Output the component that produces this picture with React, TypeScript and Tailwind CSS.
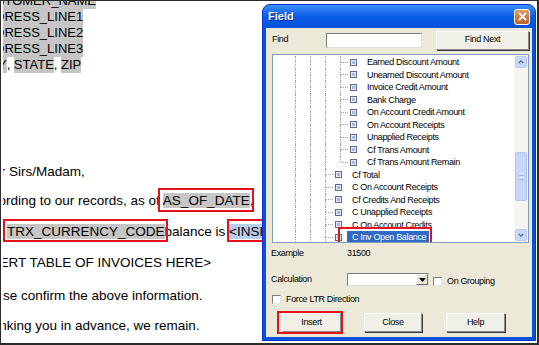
import React from "react";

type Guide = "line" | "tee" | "elbow";

const L3: Guide[] = ["line", "line", "line", "tee"];
const L2: Guide[] = ["line", "line", "tee"];

const treeRows: { label: string; guides: Guide[]; selected?: boolean }[] = [
  { label: "Earned Discount Amount", guides: L3 },
  { label: "Unearned Discount Amount", guides: L3 },
  { label: "Invoice Credit Amount", guides: L3 },
  { label: "Bank Charge", guides: L3 },
  { label: "On Account Credit Amount", guides: L3 },
  { label: "On Account Receipts", guides: L3 },
  { label: "Unapplied Receipts", guides: L3 },
  { label: "Cf Trans Amount", guides: L3 },
  { label: "Cf Trans Amount Remain", guides: ["line", "line", "line", "elbow"] },
  { label: "Cf Total", guides: L2 },
  { label: "C On Account Receipts", guides: L2 },
  { label: "Cf Credits And Receipts", guides: L2 },
  { label: "C Unapplied Receipts", guides: L2 },
  { label: "C On Account Credits", guides: L2 },
  { label: "C Inv Open Balance", guides: L2, selected: true },
];

// red annotation frame drawn over a piece of content
function Marked({ children, box }: { children: React.ReactNode; box: string }) {
  return (
    <span className="relative">
      {children}
      <span className={`pointer-events-none absolute border-2 border-[#e3121b] ${box}`} />
    </span>
  );
}

function GuideCell({ kind }: { kind: Guide }) {
  return (
    <div className="flex w-[15px] shrink-0">
      <div className="flex w-[8px] flex-col">
        <div className="h-1/2 border-r border-dotted border-[#a3a3a3]" />
        <div className={kind === "elbow" ? "h-1/2" : "h-1/2 border-r border-dotted border-[#a3a3a3]"} />
      </div>
      <div className="flex flex-1 flex-col justify-center">
        {kind !== "line" && <div className="border-t border-dotted border-[#a3a3a3]" />}
      </div>
    </div>
  );
}

function FieldIcon() {
  return (
    <div className="ml-[2px] flex h-[7px] w-[7px] shrink-0 items-center justify-center self-center border border-[#5d6c8c] bg-[#e4eaf7]">
      <div className="h-[3px] w-[3px] bg-[#a9b8d8]" />
    </div>
  );
}

function TreeRow({ label, guides, selected }: { label: string; guides: Guide[]; selected?: boolean }) {
  const text = (
    <span
      className={
        selected
          ? "ml-[5px] block h-[12.5px] bg-[#316ac5] pl-[5px] pr-[3px] leading-[12.5px] text-white"
          : "ml-[5px] block h-[12.5px] pl-[5px] pr-[3px] leading-[12.5px]"
      }
    >
      {label}
    </span>
  );
  return (
    <div className="flex h-[12.5px] shrink-0 whitespace-nowrap">
      <div className="w-[15px] shrink-0" />
      {guides.map((g, i) => (
        <GuideCell key={i} kind={g} />
      ))}
      <FieldIcon />
      <div className="self-center">
        {selected ? <Marked box="-left-[4px] -right-[3px] -top-[4px] -bottom-[1px]">{text}</Marked> : text}
      </div>
    </div>
  );
}

function Chevron({ up }: { up?: boolean }) {
  return (
    <svg viewBox="0 0 13 12" className="h-[12px] w-[13px]">
      <polyline
        points={up ? "3.5,7.5 6.5,4.5 9.5,7.5" : "3.5,4.5 6.5,7.5 9.5,4.5"}
        fill="none"
        stroke="#4d6185"
        strokeWidth="1.6"
      />
    </svg>
  );
}

function ScrollBar() {
  return (
    <div className="flex w-[14px] shrink-0 flex-col bg-[#f5f4ef] py-[1px]">
      <div className="mx-[1px] flex h-[12px] items-center justify-center rounded-[2px] border border-[#b7cbf6] bg-[#c8d8fb]">
        <Chevron up />
      </div>
      <div className="h-[84px]" />
      <div className="mx-[1px] flex h-[49px] flex-col items-center justify-center gap-[1px] rounded-[2px] border border-[#b0c6f4] bg-[#c6d7fb]">
        <div className="h-px w-[5px] bg-[#e9effd]" />
        <div className="h-px w-[5px] bg-[#9fb6e8]" />
        <div className="h-px w-[5px] bg-[#e9effd]" />
        <div className="h-px w-[5px] bg-[#9fb6e8]" />
      </div>
      <div className="flex-1" />
      <div className="mx-[1px] flex h-[12px] items-center justify-center rounded-[2px] border border-[#b7cbf6] bg-[#c8d8fb]">
        <Chevron />
      </div>
    </div>
  );
}

function Tree() {
  return (
    <div className="mx-[6px] mt-[5px] flex h-[189px] w-[257px] border border-[#7f9db9] bg-white">
      <div className="flex flex-1 flex-col overflow-hidden pt-[1px]">
        {treeRows.map((r) => (
          <TreeRow key={r.label} {...r} />
        ))}
      </div>
      <ScrollBar />
    </div>
  );
}

function Button({ label, className }: { label: string; className: string }) {
  return (
    <div
      className={`flex h-[19px] items-center justify-center border border-t-white border-l-white border-r-[#8a8a8a] border-b-[#8a8a8a] bg-[#f1f0e8] shadow-[1px_1px_0_#3c3c3c] ${className}`}
    >
      {label}
    </div>
  );
}

function CheckBox() {
  return <div className="h-[9px] w-[9px] shrink-0 border border-t-[#7c7c7c] border-l-[#7c7c7c] border-r-[#e2e2e2] border-b-[#e2e2e2] bg-white" />;
}

function Dialog() {
  return (
    <div className="mt-[3px] flex h-[337px] w-[274px] shrink-0 flex-col overflow-hidden rounded-t-[8px] border border-[#0831d9] bg-[#0a52de]">
      <div className="flex h-[23px] shrink-0 items-center justify-between bg-linear-to-b from-[#3d8ef8] via-[#0a5de8] to-[#0652dc] pl-[5px] pr-[5px]">
        <span className="text-[11px] font-bold text-white [text-shadow:1px_1px_0_#0b2a8a]">Field</span>
        <div className="flex h-[16px] w-[16px] items-center justify-center rounded-[3px] border border-white bg-linear-to-b from-[#dc9a64] to-[#bd642e]">
          <svg viewBox="0 0 10 10" className="h-[9px] w-[9px]">
            <path d="M1.8 1.8 L8.2 8.2 M8.2 1.8 L1.8 8.2" stroke="white" strokeWidth="2" strokeLinecap="square" />
          </svg>
        </div>
      </div>
      <div className="mx-[3px] mb-[3px] flex flex-1 flex-col bg-[#ece9d8] text-[9px] tracking-[-0.35px] text-black">
        <div className="mt-[3px] flex h-[18px] items-center">
          <span className="ml-[6px] w-[54px]">Find</span>
          <div className="h-[15px] w-[96px] border border-t-[#7c7c7c] border-l-[#7c7c7c] border-r-[#dcdcdc] border-b-[#dcdcdc] bg-white" />
          <Button label="Find Next" className="ml-[14px] h-[18px] w-[93px]" />
        </div>
        <Tree />
        <div className="mt-[4px] flex h-[14px] items-center">
          <span className="ml-[5px] w-[76px]">Example</span>
          <span>31500</span>
        </div>
        <div className="mt-[11px] flex h-[15px] items-center">
          <span className="ml-[5px] w-[76px]">Calculation</span>
          <div className="flex h-[13px] w-[82px] border border-t-[#7c7c7c] border-l-[#7c7c7c] border-r-[#dcdcdc] border-b-[#dcdcdc] bg-white">
            <div className="flex-1" />
            <div className="flex w-[12px] items-center justify-center border border-t-white border-l-white border-r-[#6e6e6e] border-b-[#6e6e6e] bg-[#ece9d8]">
              <svg viewBox="0 0 7 4" className="h-[4px] w-[7px]">
                <polygon points="0,0 7,0 3.5,4" fill="#000" />
              </svg>
            </div>
          </div>
          <div className="ml-[4px] mt-[4px] flex items-center gap-[5px]">
            <CheckBox />
            <span>On Grouping</span>
          </div>
        </div>
        <div className="mt-[6px] flex h-[13px] items-center gap-[5px] pl-[6px]">
          <CheckBox />
          <span>Force LTR Direction</span>
        </div>
        <div className="mt-[7px] flex items-center">
          <div className="relative ml-[16px]">
            <Button label="Insert" className="w-[59px]" />
            <div className="pointer-events-none absolute -bottom-[2px] -left-[5px] -right-[2px] -top-[2px] border-2 border-[#e3121b]" />
          </div>
          <Button label="Close" className="ml-[23px] w-[58px]" />
          <Button label="Help" className="ml-[24px] w-[59px]" />
        </div>
      </div>
    </div>
  );
}

function Letter() {
  const field = "inline-block bg-[#c6c6c6]";
  return (
    <div className="ml-[2px] w-[259px] shrink-0 overflow-hidden bg-white text-black">
      <div className="-ml-[26px] -mt-[8px] whitespace-nowrap text-[13px] leading-[16px]">
        <div><span className={field}>CUSTOMER_NAME</span></div>
        <div><span className={field}>ADDRESS_LINE1</span></div>
        <div><span className={field}>ADDRESS_LINE2</span></div>
        <div><span className={field}>ADDRESS_LINE3</span></div>
        <div>
          <span className={field}>CITY</span>, <span className={field}>STATE</span>, <span className={field}>ZIP</span>
        </div>
      </div>
      <div className="mt-[84px] whitespace-nowrap text-[13.5px] leading-[30px]">
        <div className="-ml-[27px] h-[29px]">Dear Sirs/Madam,</div>
        <div className="-ml-[27px] h-[31px]">
          According to our records, as of{" "}
          <Marked box="-left-[5px] -right-[1px] -top-[5px] -bottom-[4px]">
            <span className="bg-[#c6c6c6]">AS_OF_DATE</span>,
          </Marked>
        </div>
        <div className="ml-[4px] h-[31px]">
          <Marked box="-left-[4px] -right-[3px] -top-[5px] -bottom-[3px]">
            <span className="bg-[#c6c6c6]">TRX_CURRENCY_CODE</span>
          </Marked>
          balance is{" "}
          <Marked box="-left-[2px] -right-[2px] -top-[5px] -bottom-[3px]">
            <span className="bg-[#b9cdee]">&lt;INSERT TABLE OF INVOICES HERE&gt;</span>
          </Marked>
        </div>
        <div className="-ml-[34px] h-[33px]">&lt;INSERT TABLE OF INVOICES HERE&gt;</div>
        <div className="-ml-[27px] h-[30px]">Please confirm the above information.</div>
        <div className="-ml-[27px] h-[30px]">Thanking you in advance, we remain.</div>
      </div>
    </div>
  );
}

export default function App() {
  return (
    <div className="flex h-[345px] w-[539px] overflow-hidden border-t border-l border-r-2 border-b-2 border-[#2b2b2b] bg-white font-['Liberation_Sans',Arial,sans-serif]">
      <Letter />
      <Dialog />
    </div>
  );
}
